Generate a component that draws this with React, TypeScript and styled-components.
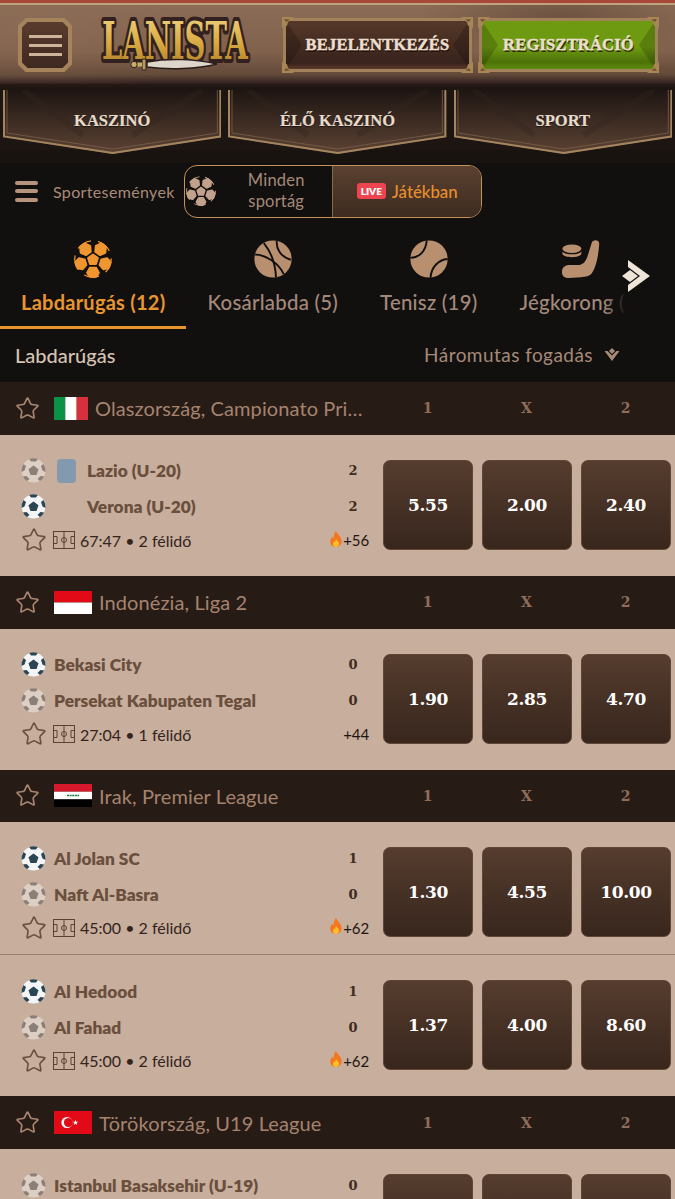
import React from "react";
import styled, { createGlobalStyle } from "styled-components";
import { Star } from "lucide-react";

const Global = createGlobalStyle`
  html, body { margin: 0; padding: 0; background: #120f0f; }
  body { font-family: Lato, "Noto Sans", sans-serif; width: 675px; height: 1199px; overflow: hidden; }
  * { box-sizing: border-box; }
`;

const Page = styled.div`width: 675px; height: 1199px; overflow: hidden; background: #120f0f;`;

const Header = styled.header`
  height: 84px;
  border-top: 3px solid #a8483a;
  display: flex;
  align-items: center;
  padding: 12px 18px 9px;
  position: relative;
  background:
    radial-gradient(ellipse 140px 40px at 560px 14px, rgba(70,50,38,.4), transparent),
    radial-gradient(ellipse 200px 60px at 30px 30px, rgba(145,112,88,.4), transparent),
    linear-gradient(180deg, #8b6c56 0%, #80614c 60%, #644a3a 88%, #2f1f1e 100%);
  &::before {
    content: ""; position: absolute; left: 0; right: 0; top: 0; height: 2px; background: #c0a27c;
  }
`;

const Burger = styled.button`
  width: 54px; height: 54px; flex: none; padding: 0; border: 0; position: relative;
  display: flex; flex-direction: column; align-items: center; justify-content: center; gap: 6px;
  clip-path: polygon(14% 0, 86% 0, 100% 14%, 100% 86%, 86% 100%, 14% 100%, 0 86%, 0 14%);
  background: #a5845c;
  &::before {
    content: ""; position: absolute; inset: 4px; background: linear-gradient(180deg, #5a3c2e, #3e2820);
    clip-path: polygon(12% 0, 88% 0, 100% 12%, 100% 88%, 88% 100%, 12% 100%, 0 88%, 0 12%);
  }
`;
const BurgerLine = styled.span`position: relative; width: 33px; height: 3px; background: #cdb399;`;

const Logo = styled.svg`width: 158px; height: 62px; flex: none; margin: 0 28px 0 25px;`;

const HeaderButton = styled.button<{ $green?: boolean }>`
  height: 54px; width: ${(p) => (p.$green ? "179px" : "189px")}; flex: none; position: relative;
  margin-left: ${(p) => (p.$green ? "7px" : "0")};
  border: 3px solid #a2825a; padding: 0;
  font: 700 16.5px "Liberation Serif", serif; letter-spacing: .2px; color: #eadfce;
  -webkit-text-stroke: .45px #eadfce;
  text-shadow: 1px 2px 0 rgba(30,15,10,.8);
  background: ${(p) =>
    p.$green
      ? "linear-gradient(180deg, #6d9a10 0%, #6f9a12 55%, #4c7208 85%, #5e8a0c 100%)"
      : "linear-gradient(180deg, #553829 0%, #432b21 55%, #37221c 88%, #5d3b2b 100%)"};
  &::before, &::after {
    content: ""; position: absolute; top: 0; bottom: 0; width: 16px; background: rgba(0,0,0,.18);
  }
  &::before { left: 0; clip-path: polygon(0 0, 100% 50%, 0 100%); }
  &::after { right: 0; clip-path: polygon(100% 0, 0 50%, 100% 100%); }
`;
const ButtonLabel = styled.span`position: relative;`;
const Corner = styled.svg<{ $x: "left" | "right"; $y: "top" | "bottom" }>`
  position: absolute; width: 12px; height: 12px; z-index: 1;
  ${(p) => p.$x}: -4px; ${(p) => p.$y}: -4px;
  transform: scale(${(p) => (p.$x === "left" ? 1 : -1)}, ${(p) => (p.$y === "top" ? 1 : -1)});
`;

const Nav = styled.nav`
  height: 79px; padding: 6px 3px 0; display: flex; gap: 7px;
  background: linear-gradient(180deg, #241815 0 3px, #1c1512 3px 66px, #19130f 66px);
`;
const NavTab = styled.a`
  flex: 1; height: 64px; position: relative; display: flex; align-items: center; justify-content: center;
  padding-bottom: 3px;
  font: 700 16.5px "Liberation Serif", serif; color: #e6dccd;
  -webkit-text-stroke: .2px #e6dccd;
  text-shadow: 0 1px 1px #1a1210;
`;
const NavShape = styled.svg`position: absolute; inset: 0; width: 100%; height: 100%;`;
const NavLabel = styled.span`position: relative;`;

const SubBar = styled.div`
  height: 58px; display: flex; align-items: center; padding: 0 0 2px 15px; background: #120f0f;
`;
const MiniBurger = styled.div`display: flex; flex-direction: column; gap: 4.5px; width: 23px; flex: none; margin-right: 15px;`;
const MiniLine = styled.span`height: 4px; border-radius: 2px; background: #b5937d;`;
const SubTitle = styled.span`font-size: 16px; color: #a98b78; letter-spacing: .35px; margin-right: 9px;`;
const Toggle = styled.div`
  width: 298px; height: 53px; border: 1px solid #c2925a; border-radius: 13px; display: flex; overflow: hidden;
`;
const ToggleAll = styled.div`
  width: 148px; display: flex; align-items: center; border-right: 1px solid #8a6a4c; padding-left: 1px;
`;
const ToggleText = styled.span`
  flex: 1; margin-left: 5px; text-align: center; font-size: 16.5px; line-height: 21px; color: #a58a78; letter-spacing: .2px;
`;
const ToggleLive = styled.div`
  flex: 1; display: flex; align-items: center; justify-content: center; gap: 6px; padding-left: 1px;
  background: linear-gradient(180deg, #5b4130, #3d2b20);
  font-size: 16.8px; font-weight: 500; color: #e88f2c;
`;
const LiveBadge = styled.span`
  width: 29px; height: 16px; border-radius: 3px; background: #ee4450; color: #fff;
  font: 800 10px Lato, sans-serif; display: flex; align-items: center; justify-content: center;
`;

const SportsWrap = styled.div`position: relative; height: 108px; overflow: hidden;`;
const SportsRow = styled.div`display: flex; height: 108px;`;
const SportTab = styled.div<{ $active?: boolean }>`
  flex: none; padding: 19px 21px 0; height: 108px; display: flex; flex-direction: column; align-items: center;
  white-space: nowrap; font-size: ${(p) => (p.$active ? "20px" : "20.4px")}; font-weight: ${(p) => (p.$active ? 700 : 500)};
  color: ${(p) => (p.$active ? "#e8952f" : "#a3897a")};
  letter-spacing: .25px;
  border-bottom: 3px solid ${(p) => (p.$active ? "#e8952f" : "transparent")};
`;
const SportLabel = styled.span`margin-top: 11px; line-height: 26px;`;
const Fade = styled.div`
  position: absolute; left: 605px; top: 0; bottom: 0; width: 70px;
  background: linear-gradient(90deg, rgba(18,15,15,0), #120f0f 30%);
`;
const NextArrow = styled.svg`position: absolute; left: 621px; top: 38px; width: 30px; height: 34px;`;

const ListHead = styled.div`
  height: 53px; display: flex; align-items: center; justify-content: space-between; padding: 0 55px 2px 15px;
`;
const ListTitle = styled.span`font-size: 20px; font-weight: 500; color: #d6c3b3;`;
const MarketPick = styled.span`display: flex; align-items: center; gap: 11px; font-size: 19px; color: #a58a78; letter-spacing: .45px;`;

const LeagueBar = styled.div`
  height: 52.8px; background: #271b16; display: flex; align-items: center; padding-left: 15px;
`;
const LeagueName = styled.span`
  flex: none; width: 270px; margin-left: 7px; font-size: 20px; color: #a4846f;
  white-space: nowrap; overflow: hidden; text-overflow: ellipsis; letter-spacing: .1px;
`;
const FlagBox = styled.svg<{ $w: number }>`width: ${(p) => p.$w}px; height: 23px; flex: none; margin-left: 14px;`;
const Columns = styled.div`margin-left: auto; width: 297px; display: grid; grid-template-columns: repeat(3, 99px);`;
const ColHead = styled.span`text-align: center; font: 700 14px "DejaVu Serif", serif; color: #8f6d59;`;

const Group = styled.div`background: #c8ae9c;`;
const Row = styled.div<{ $last: boolean }>`
  display: flex; justify-content: space-between; align-items: flex-start;
  padding: 18px 4px ${(p) => (p.$last ? "18px" : "9px")} 21px;
  ${(p) => (p.$last ? "" : "border-bottom: 1px solid #9a7f6c;")}
`;
const Info = styled.div`width: 348px; height: 105px; display: flex; flex-direction: column; flex: none;`;
const Team = styled.div`height: 36px; display: flex; align-items: center; color: #6a4f3d; font-size: 17.3px; font-weight: 800;`;
const TeamBall = styled.svg`width: 25px; height: 25px; flex: none; margin-right: 8px;`;
const Badge = styled.span`width: 19px; height: 24px; border-radius: 4px; background: #8299ae; margin: 0 11px 0 3px; flex: none;`;
const BadgeGap = styled.span`width: 33px; flex: none;`;
const TeamName = styled.span`flex: 1;`;
const Score = styled.span`width: 32px; text-align: center; font: 700 13px "DejaVu Serif", serif; color: #3f2c20;`;
const Meta = styled.div`height: 31px; display: flex; align-items: center; font-size: 16px; color: #33241c;`;
const MetaStar = styled.span`display: flex; width: 32px; flex: none; color: #6b5040;`;
const Pitch = styled.svg`width: 22px; height: 18px; margin-right: 5px; flex: none;`;
const MetaTime = styled.span`flex: 1;`;
const Hot = styled.span`display: flex; align-items: center; font-size: 15px; color: #1f1612; letter-spacing: -.1px;`;
const Flame = styled.svg`width: 14px; height: 16px; margin-bottom: 3px;`;
const Odds = styled.div`display: grid; grid-template-columns: repeat(3, 90px); gap: 9px; flex: none; height: 90px; margin-top: 7px;`;
const Odd = styled.button`
  border: 1px solid #5f4636; border-radius: 7px; padding: 0; background: linear-gradient(180deg, #553c2e, #38261d);
  color: #fff; font: 700 17px "DejaVu Serif", serif; letter-spacing: -.3px;
`;

const hexAt = (angleDeg: number) => {
  const a = (angleDeg * Math.PI) / 180;
  const cx = 50 + 34 * Math.cos(a);
  const cy = 52 + 34 * Math.sin(a);
  const pts: string[] = [];
  for (let i = 0; i < 6; i++) {
    const t = a + (i * Math.PI) / 3 + Math.PI / 6;
    pts.push(`${(cx + 15.5 * Math.cos(t)).toFixed(1)},${(cy + 15.5 * Math.sin(t)).toFixed(1)}`);
  }
  return pts.join(" ");
};
const patchAngles = [-54, 18, 90, 162, 234];

const SoccerShape = ({ color, id }: { color: string; id: string }) => (
  <>
    <clipPath id={id}><circle cx="50" cy="50" r="50" /></clipPath>
    <g clipPath={`url(#${id})`}>
      <g fill={color} stroke={color} strokeWidth="5" strokeLinejoin="round">
        <polygon points="50,38 63,47.5 58,63 42,63 37,47.5" />
        {patchAngles.map((a) => <polygon key={a} points={hexAt(a)} />)}
      </g>
      <circle cx="50" cy="50" r="48" fill="none" stroke={color} strokeWidth="3.5" strokeDasharray="40 20.3" transform="rotate(-74 50 50)" />
    </g>
  </>
);

const TeamBallIcon = ({ dim }: { dim?: boolean }) => (
  <TeamBall viewBox="0 0 100 100" opacity={dim ? 0.55 : 1}>
    <circle cx="50" cy="50" r="48" fill={dim ? "#f0ebe6" : "#f3f5f6"} />
    <g fill={dim ? "#5a5a5a" : "#2b4555"}>
      <path d="M50 30 L70 45 L62 68 L38 68 L30 45 Z" />
      <path d="M33 4 Q50 -2 67 4 L60 14 L40 14 Z" />
      <path d="M90 24 Q100 40 98 56 L86 50 L80 32 Z" />
      <path d="M10 24 Q0 40 2 56 L14 50 L20 32 Z" />
      <path d="M24 92 Q12 84 8 74 L22 72 L34 84 Z" />
      <path d="M76 92 Q88 84 92 74 L78 72 L66 84 Z" />
    </g>
  </TeamBall>
);

const PitchIcon = () => (
  <Pitch viewBox="0 0 22 18" fill="none" stroke="#5b4334" strokeWidth="1">
    <rect x=".5" y=".5" width="21" height="17" />
    <path d="M11 .5V17.5M.5 5.5H4V12.5H.5M21.5 5.5H18V12.5H21.5" />
    <circle cx="11" cy="9" r="2.5" />
  </Pitch>
);

const FlameIcon = () => (
  <Flame viewBox="0 0 14 16">
    <path d="M7 0C8 3 12 5 12.5 9.5C13 13 10.5 16 7 16C3.5 16 1 13.5 1.3 10C1.5 8 2.6 6.8 3.4 5.6C3.8 6.6 4.2 7.2 4.8 7.4C4.6 4.6 5.4 2 7 0Z" fill="#f4761f" />
    <path d="M7 8C8 9.6 10 10.8 10 12.8C10 14.6 8.6 16 7 16C5.2 16 4 14.6 4 13C4 11.6 5 11 5.4 10.2C5.8 10.8 6 11 6.4 11C6.3 10 6.4 9 7 8Z" fill="#fbc02d" />
  </Flame>
);

const flags: Record<string, { w: number; art: React.ReactNode }> = {
  it: {
    w: 34,
    art: (
      <>
        <rect width="11.4" height="23" fill="#0a9246" />
        <rect x="11.3" width="11.4" height="23" fill="#fff" />
        <rect x="22.6" width="11.4" height="23" fill="#d6303c" />
      </>
    ),
  },
  id: {
    w: 38,
    art: (
      <>
        <rect width="38" height="11.5" fill="#e30a17" />
        <rect y="11.5" width="38" height="11.5" fill="#fff" />
      </>
    ),
  },
  iq: {
    w: 38,
    art: (
      <>
        <rect width="38" height="7.7" fill="#d8192c" />
        <rect y="7.7" width="38" height="7.7" fill="#fff" />
        <rect y="15.4" width="38" height="7.6" fill="#000" />
        <path d="M13 11.5h12" stroke="#1d7a3e" strokeWidth="1.6" strokeDasharray="2 .6" />
      </>
    ),
  },
  tr: {
    w: 38,
    art: (
      <>
        <rect width="38" height="23" fill="#e30a17" />
        <circle cx="13" cy="11.5" r="5.6" fill="#fff" />
        <circle cx="14.4" cy="11.5" r="4.5" fill="#e30a17" />
        <path d="M21.5 8.7l.7 2 2.1.1-1.7 1.2.6 2-1.7-1.2-1.7 1.2.6-2-1.7-1.2 2.1-.1z" fill="#fff" />
      </>
    ),
  },
};

type Match = {
  a: string; b: string; sa: number; sb?: number; ballA?: boolean; ballB?: boolean;
  time: string; more: string; hot?: boolean; odds: string[]; badge?: boolean;
};
type League = { flag: string; name: string; matches: Match[] };

const leagues: League[] = [
  { flag: "it", name: "Olaszország, Campionato Primavera", matches: [
    { a: "Lazio (U-20)", b: "Verona (U-20)", sa: 2, sb: 2, ballA: true, time: "67:47 • 2 félidő", more: "+56", hot: true, odds: ["5.55", "2.00", "2.40"], badge: true },
  ]},
  { flag: "id", name: "Indonézia, Liga 2", matches: [
    { a: "Bekasi City", b: "Persekat Kabupaten Tegal", sa: 0, sb: 0, ballB: true, time: "27:04 • 1 félidő", more: "+44", odds: ["1.90", "2.85", "4.70"] },
  ]},
  { flag: "iq", name: "Irak, Premier League", matches: [
    { a: "Al Jolan SC", b: "Naft Al-Basra", sa: 1, sb: 0, ballB: true, time: "45:00 • 2 félidő", more: "+62", hot: true, odds: ["1.30", "4.55", "10.00"] },
    { a: "Al Hedood", b: "Al Fahad", sa: 1, sb: 0, ballB: true, time: "45:00 • 2 félidő", more: "+62", hot: true, odds: ["1.37", "4.00", "8.60"] },
  ]},
  { flag: "tr", name: "Törökország, U19 League", matches: [
    { a: "Istanbul Basaksehir (U-19)", b: "", sa: 0, ballA: true, time: "", more: "", odds: ["", "", ""] },
  ]},
];

const Leaf = () => (
  <>
    <path d="M0 0H12L9 3L6 5L5 9L2 8L0 12Z" fill="#a98755" />
    <path d="M2 2L8 2.5L4 5Z" fill="#6f5236" />
  </>
);
const Corners = () => (
  <>
    {(["left", "right"] as const).flatMap((x) =>
      (["top", "bottom"] as const).map((y) => (
        <Corner key={x + y} $x={x} $y={y} viewBox="0 0 12 12"><Leaf /></Corner>
      )),
    )}
  </>
);

const NavBanner = () => (
  <NavShape viewBox="0 0 219 64" preserveAspectRatio="none">
    <defs>
      <linearGradient id="nb" x1="0" y1="0" x2="0" y2="1">
        <stop offset="0" stopColor="#1e1512" />
        <stop offset="1" stopColor="#5c4334" />
      </linearGradient>
    </defs>
    <path d="M0 0H219V47L110 64L0 47Z" fill="url(#nb)" />
    <path d="M20 0L80 45M200 0L130 45" stroke="#33251f" strokeWidth="6" opacity=".35" />
    <path d="M1 0V46.5L110 63L218 46.5V0" fill="none" stroke="#a5855f" strokeWidth="2" />
    <path d="M4 0V43L110 59L215 43V0" fill="none" stroke="#7b6049" strokeWidth=".8" />
  </NavShape>
);

const LogoMark = () => (
  <Logo viewBox="0 0 158 62">
    <defs>
      <linearGradient id="gold" x1="0" y1="0" x2="0" y2="1">
        <stop offset="0" stopColor="#f3d786" />
        <stop offset=".55" stopColor="#d7a83f" />
        <stop offset="1" stopColor="#a87624" />
      </linearGradient>
    </defs>
    <text x="0" y="0" transform="translate(5 45) scale(.555 1)" fontFamily="'DejaVu Serif', serif" fontWeight="700" fontSize="52"
      fill="url(#gold)" stroke="#33211f" strokeWidth="8" strokeLinejoin="round" paintOrder="stroke">LANISTA</text>
    <path d="M50 48C72 44 100 45 120 50C100 55 72 56 50 53Z" fill="#dcd7ca" stroke="#2a1b1a" strokeWidth="1.4" />
    <rect x="45" y="45" width="4" height="11" rx="1" fill="#b49a5d" stroke="#2a1b1a" />
    <rect x="39" y="48.5" width="6" height="4" fill="#c7ac6c" />
    <circle cx="37" cy="50.5" r="3.2" fill="#c7ac6c" stroke="#2a1b1a" />
  </Logo>
);

const SportSoccer = ({ color, id, size }: { color: string; id: string; size: number }) => (
  <svg width={size} height={size} viewBox="0 0 100 100"><SoccerShape color={color} id={id} /></svg>
);

export default function App() {
  return (
    <Page>
      <Global />
      <Header>
        <Burger aria-label="menu"><BurgerLine /><BurgerLine /><BurgerLine /></Burger>
        <LogoMark />
        <HeaderButton><Corners /><ButtonLabel>BEJELENTKEZÉS</ButtonLabel></HeaderButton>
        <HeaderButton $green><Corners /><ButtonLabel>REGISZTRÁCIÓ</ButtonLabel></HeaderButton>
      </Header>
      <Nav>
        {["KASZINÓ", "ÉLŐ KASZINÓ", "SPORT"].map((t) => (
          <NavTab key={t}><NavBanner /><NavLabel>{t}</NavLabel></NavTab>
        ))}
      </Nav>
      <SubBar>
        <MiniBurger><MiniLine /><MiniLine /><MiniLine /></MiniBurger>
        <SubTitle>Sportesemények</SubTitle>
        <Toggle>
          <ToggleAll>
            <SportSoccer color="#c2a28c" id="ballAll" size={30} />
            <ToggleText>Minden<br />sportág</ToggleText>
          </ToggleAll>
          <ToggleLive><LiveBadge>LIVE</LiveBadge>Játékban</ToggleLive>
        </Toggle>
      </SubBar>
      <SportsWrap>
        <SportsRow>
          <SportTab $active>
            <SportSoccer color="#ef9630" id="ballActive" size={38} />
            <SportLabel>Labdarúgás (12)</SportLabel>
          </SportTab>
          <SportTab>
            <svg width="38" height="38" viewBox="0 0 100 100">
              <circle cx="50" cy="50" r="49" fill="#b8906f" />
              <g fill="none" stroke="#120f0f" strokeWidth="5">
                <path d="M26 8C42 28 56 60 58 98" />
                <path d="M60 2C58 20 68 44 97 52" />
                <path d="M3 38C30 38 66 62 78 90" />
              </g>
            </svg>
            <SportLabel>Kosárlabda (5)</SportLabel>
          </SportTab>
          <SportTab>
            <svg width="38" height="38" viewBox="0 0 100 100">
              <circle cx="50" cy="50" r="49" fill="#b8906f" />
              <g fill="none" stroke="#120f0f" strokeWidth="5">
                <path d="M44 1C42 28 26 46 1 47" />
                <path d="M99 50C74 52 56 72 54 99" />
              </g>
            </svg>
            <SportLabel>Tenisz (19)</SportLabel>
          </SportTab>
          <SportTab>
            <svg width="38" height="38" viewBox="0 0 100 100">
              <ellipse cx="26" cy="23" rx="25" ry="11" fill="#b8906f" />
              <path d="M1 30C8 40 44 40 51 30V37C46 48 6 48 1 37Z" fill="#b8906f" />
              <path d="M78 8C80 -2 98 -2 98 10C96 40 90 70 80 85C74 96 62 97 50 98L18 100C4 100 0 92 0 84C0 72 8 66 20 66H42C56 66 64 54 68 40Z" fill="#b8906f" />
            </svg>
            <SportLabel>Jégkorong (3)</SportLabel>
          </SportTab>
        </SportsRow>
        <Fade />
        <NextArrow viewBox="0 0 30 34">
          <path d="M7 1L29 17L7 33V26L19 17L7 8Z" fill="#efe6d8" />
          <path d="M1 17L9 11L17 17L9 23Z" fill="#efe6d8" />
        </NextArrow>
      </SportsWrap>
      <ListHead>
        <ListTitle>Labdarúgás</ListTitle>
        <MarketPick>
          Háromutas fogadás
          <svg width="16" height="13" viewBox="0 0 16 13" fill="#a58a78">
            <path d="M8 0L11 3L8 6L5 3Z" />
            <path d="M.5 3H3.5L8 7.5L12.5 3H15.5L8 13Z" />
          </svg>
        </MarketPick>
      </ListHead>
      {leagues.map((l) => (
        <section key={l.name}>
          <LeagueBar>
            <Star size={25} strokeWidth={1.6} color="#a8866f" />
            <FlagBox $w={flags[l.flag].w} viewBox={`0 0 ${flags[l.flag].w} 23`}>{flags[l.flag].art}</FlagBox>
            <LeagueName>{l.name}</LeagueName>
            <Columns>
              <ColHead>1</ColHead><ColHead>X</ColHead><ColHead>2</ColHead>
            </Columns>
          </LeagueBar>
          <Group>
            {l.matches.map((m, i) => (
              <Row key={m.a} $last={i === l.matches.length - 1}>
                <Info>
                  <Team>
                    <TeamBallIcon dim={m.ballA} />
                    {m.badge && <Badge />}
                    <TeamName>{m.a}</TeamName>
                    <Score>{m.sa}</Score>
                  </Team>
                  {m.b && (
                    <>
                      <Team>
                        <TeamBallIcon dim={m.ballB} />
                        {m.badge && <BadgeGap />}
                        <TeamName>{m.b}</TeamName>
                        <Score>{m.sb}</Score>
                      </Team>
                      <Meta>
                        <MetaStar><Star size={26} strokeWidth={1.5} /></MetaStar>
                        <PitchIcon />
                        <MetaTime>{m.time}</MetaTime>
                        <Hot>{m.hot && <FlameIcon />}{m.more}</Hot>
                      </Meta>
                    </>
                  )}
                </Info>
                <Odds>
                  {m.odds.map((o, k) => <Odd key={k}>{o}</Odd>)}
                </Odds>
              </Row>
            ))}
          </Group>
        </section>
      ))}
    </Page>
  );
}
